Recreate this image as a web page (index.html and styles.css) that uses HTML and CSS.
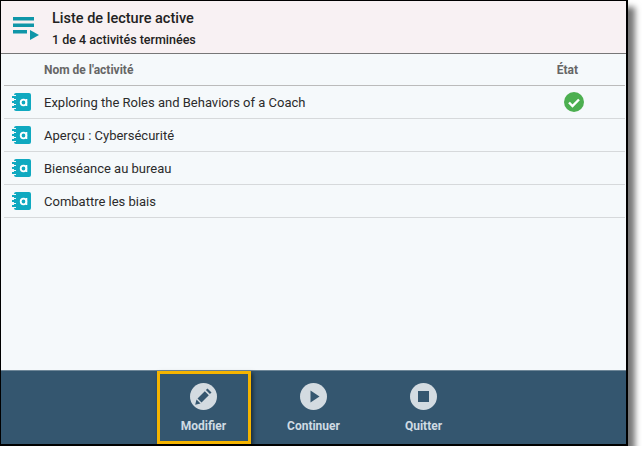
FILE: index.html
```html
<!DOCTYPE html>
<html lang="fr">

<head>
    <meta charset="UTF-8">
    <meta name="viewport" content="width=device-width, initial-scale=1.0">
    <title>Liste de lecture active</title>
    <link rel="stylesheet" href="styles.css">
</head>

<body>
    <div class="window">
        <!--Header-->
        <div class="header">
            <svg class="playlist-icon" width="26" height="24" viewBox="0 0 26 24">
                <rect x="0" y="0" width="21" height="3.5" />
                <rect x="0" y="6.5" width="21" height="3.5" />
                <rect x="0" y="13" width="14" height="3.5" />
                <polygon points="17,13 26,18 17,23" />
            </svg>
            <div>
                <div class="title">Liste de lecture active</div>
                <div class="subtitle">1 de 4 activités terminées</div>
            </div>
        </div>

        <!--Activity list-->
        <div class="list">
            <div class="row head">
                <span class="name">Nom de l'activité</span>
                <span class="state">État</span>
            </div>
            <div class="row">
                <svg class="book" width="19" height="18" viewBox="0 0 19 18">
                    <use href="#book-icon" />
                </svg>
                <span class="name">Exploring the Roles and Behaviors of a Coach</span>
                <svg class="check" width="20" height="20" viewBox="0 0 20 20">
                    <circle cx="10" cy="10" r="10" fill="#4caf50" />
                    <path d="M5 10.5l3.5 3.5 6.5-6.5" fill="none" stroke="#fff" stroke-width="2.4" />
                </svg>
            </div>
            <div class="row">
                <svg class="book" width="19" height="18" viewBox="0 0 19 18">
                    <use href="#book-icon" />
                </svg>
                <span class="name">Aperçu : Cybersécurité</span>
            </div>
            <div class="row">
                <svg class="book" width="19" height="18" viewBox="0 0 19 18">
                    <use href="#book-icon" />
                </svg>
                <span class="name">Bienséance au bureau</span>
            </div>
            <div class="row">
                <svg class="book" width="19" height="18" viewBox="0 0 19 18">
                    <use href="#book-icon" />
                </svg>
                <span class="name">Combattre les biais</span>
            </div>
        </div>

        <!--Toolbar-->
        <div class="toolbar">
            <div class="tool selected">
                <svg width="27" height="27" viewBox="0 0 27 27">
                    <circle cx="13.5" cy="13.5" r="13.5" fill="#d3dbe1" />
                    <path d="M17.5 5.5l4 4-1.6 1.6-4-4zM14.8 8.2l4 4-7.3 7.3-4-4zM6.5 16.5l4 4-5.3 1.3z" fill="#34566f" />
                </svg>
                <span>Modifier</span>
            </div>
            <div class="tool">
                <svg width="27" height="27" viewBox="0 0 27 27">
                    <circle cx="13.5" cy="13.5" r="13.5" fill="#d3dbe1" />
                    <polygon points="10.5,7.5 19.5,13.5 10.5,19.5" fill="#34566f" />
                </svg>
                <span>Continuer</span>
            </div>
            <div class="tool">
                <svg width="27" height="27" viewBox="0 0 27 27">
                    <circle cx="13.5" cy="13.5" r="13.5" fill="#d3dbe1" />
                    <rect x="8" y="8" width="11" height="11" fill="#34566f" />
                </svg>
                <span>Quitter</span>
            </div>
        </div>
    </div>

    <svg class="defs" width="0" height="0">
        <symbol id="book-icon" viewBox="0 0 19 18">
            <rect x="2" y="0" width="17" height="18" rx="2" fill="#0fa9c0" />
            <path d="M0 4h4M0 9h4M0 14h4" stroke="#0fa9c0" stroke-width="2" />
            <path d="M2 2.5h2M2 6.5h2M2 11.5h2M2 15.5h2" stroke="#f5f9fb" stroke-width="1" />
            <circle cx="11.5" cy="9.5" r="2.8" fill="none" stroke="#fff" stroke-width="1.8" />
            <path d="M14.5 6v7" stroke="#fff" stroke-width="1.6" />
        </symbol>
    </svg>
</body>

</html>
```

FILE: styles.css
```css
body {
    margin: 0;
    background-color: white;
    font-family: Roboto, "Noto Sans", sans-serif;
}

.window {
    display: flex;
    flex-direction: column;
    box-sizing: border-box;
    width: 628px;
    height: 446px;
    border: solid black 1px;
    border-width: 1px 2px 2px 1px;
    background-color: #f5f9fb;
    box-shadow: 7px 7px 6px #777;
}

.header {
    display: flex;
    align-items: center;
    gap: 13px;
    box-sizing: border-box;
    height: 53px;
    padding: 4px 0 0 12px;
    background-color: #f8f1f3;
    border-bottom: solid #777 1px;
    color: #222;
}

.playlist-icon {
    flex: none;
    fill: #0f96a8;
}

.title {
    font-size: 14.5px;
    font-weight: 500;
    line-height: 21px;
}

.subtitle {
    font-size: 12.5px;
    font-weight: 500;
    line-height: 21px;
}

.list {
    flex: 1;
    padding: 0 1px 0 3px;
}

.row {
    display: flex;
    align-items: center;
    height: 33px;
    box-sizing: border-box;
    padding-left: 8px;
    border-bottom: solid #d6d9db 1px;
    font-size: 13px;
    color: #2b2b2b;
}

.row.head {
    height: 32px;
    padding-left: 40px;
    border-bottom-color: #bbb;
    font-size: 12px;
    font-weight: 700;
    color: #666;
}

.book {
    flex: none;
    margin-right: 13px;
}

.name {
    flex: 1;
}

.state {
    margin-right: 47px;
}

.check {
    flex: none;
    margin-right: 41px;
}

.toolbar {
    display: flex;
    justify-content: center;
    height: 74px;
    background-color: #34566f;
    border-top: solid #6f8798 1px;
    box-sizing: border-box;
}

.tool {
    display: flex;
    flex-direction: column;
    align-items: center;
    box-sizing: border-box;
    width: 110px;
    padding-top: 12px;
    gap: 9px;
    font-size: 12px;
    font-weight: 700;
    color: #cfdbe3;
}

.tool.selected {
    width: 94px;
    height: 73px;
    margin: 0 8px;
    padding-top: 9px;
    border: solid #f5b400 3px;
    box-shadow: 2px 2px 4px rgba(0, 0, 0, .5);
}

.defs {
    position: absolute;
}
```
